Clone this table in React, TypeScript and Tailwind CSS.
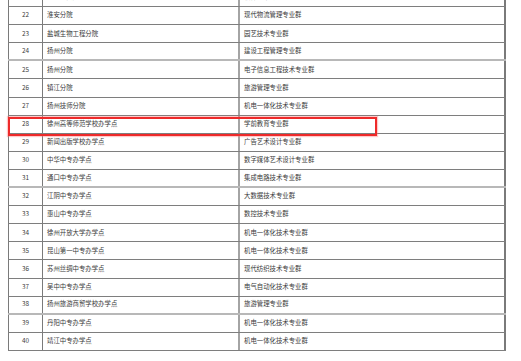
const rows: [string, string, string][] = [
  ["21", "宿迁经贸分院", "软件技术专业群"],
  ["22", "淮安分院", "现代物流管理专业群"],
  ["23", "盐城生物工程分院", "园艺技术专业群"],
  ["24", "扬州分院", "建设工程管理专业群"],
  ["25", "扬州分院", "电子信息工程技术专业群"],
  ["26", "镇江分院", "旅游管理专业群"],
  ["27", "扬州技师分院", "机电一体化技术专业群"],
  ["28", "徐州高等师范学校办学点", "学前教育专业群"],
  ["29", "新闻出版学校办学点", "广告艺术设计专业群"],
  ["30", "中华中专办学点", "数字媒体艺术设计专业群"],
  ["31", "通口中专办学点", "集成电路技术专业群"],
  ["32", "江阴中专办学点", "大数据技术专业群"],
  ["33", "惠山中专办学点", "数控技术专业群"],
  ["34", "徐州开放大学办学点", "机电一体化技术专业群"],
  ["35", "昆山第一中专办学点", "机电一体化技术专业群"],
  ["36", "苏州丝绸中专办学点", "现代纺织技术专业群"],
  ["37", "吴中中专办学点", "电气自动化技术专业群"],
  ["38", "扬州旅游商贸学校办学点", "旅游管理专业群"],
  ["39", "丹阳中专办学点", "机电一体化技术专业群"],
  ["40", "靖江中专办学点", "机电一体化技术专业群"],
];

// lines that look lighter / thicker in the scan
const softLines = new Set(["24", "31", "38"]);

export default function App() {
  return (
    <div
      className="relative h-[361px] w-[521px] overflow-hidden bg-white text-[#3a3a3a]"
      style={{ fontFamily: '"Noto Sans CJK SC", "Noto Sans", sans-serif' }}
    >
      <div className="ml-[8px] mt-[-11px] w-[498px] text-[6.4px] leading-none">
        {rows.map(([no, school, group]) => (
          <div
            key={no}
            className={
              softLines.has(no)
                ? "box-border grid h-[18.1px] grid-cols-[35px_195px_268px] border-b-2 border-b-[#b8b8b8]"
                : "box-border grid h-[18.1px] grid-cols-[35px_195px_268px] border-b border-b-[#7e7e7e]"
            }
          >
            <div className="flex items-center justify-center border-x border-x-[#7a7a7a]">{no}</div>
            <div className="flex items-center pl-[4px]">{school}</div>
            <div className="flex items-center border-x-2 border-l-[#a4a4a4] border-r-[#7a7a7a] pl-[4px]">
              {group}
            </div>
          </div>
        ))}
      </div>

      {/* highlight box around row 28 */}
      <div className="absolute left-[8px] top-[117px] h-[19px] w-[369px] border-2 border-[#ee2a2a] shadow-[0_0_1px_1px_rgba(255,120,120,0.4)]" />
    </div>
  );
}
